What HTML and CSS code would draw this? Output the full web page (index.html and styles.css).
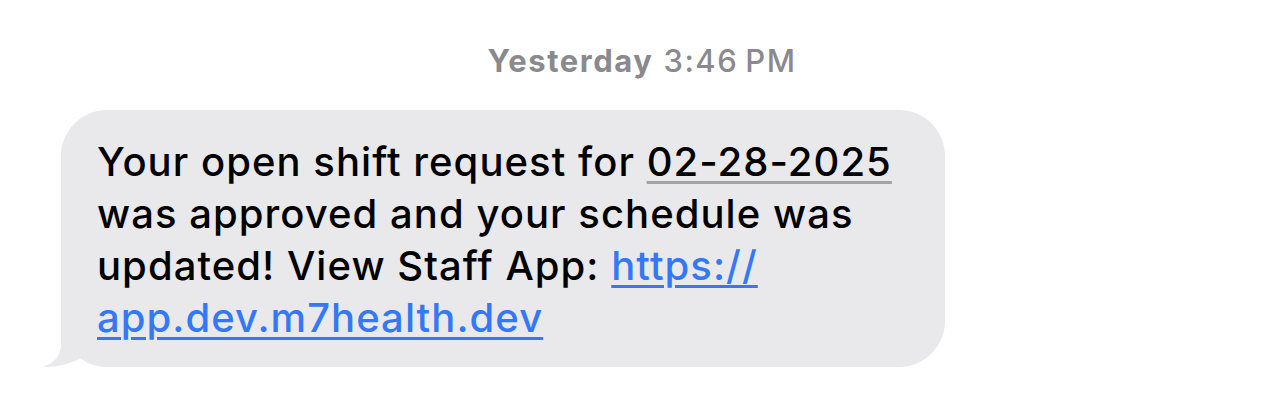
FILE: index.html
```html
<!DOCTYPE html>
<html>
<head>
	<title>Messages</title>
	<link rel="stylesheet" href="styles.css">
</head>
<body>
	<div class="thread">
		<p class="stamp"><b>Yesterday</b> 3:46&#8201;PM</p>

		<div class="bubble">
			<p class="bubble__text">
				Your open shift request for <span class="date">02-28-2025</span><br>
				was approved and your schedule was<br>
				updated! View Staff App: <a href="#">https://<br>app.dev.m7health.dev</a>
			</p>
			<svg class="bubble__tail" width="48" height="40" viewBox="0 0 48 40">
				<path d="M19 0 L19 17 C19 29 12 36 1 40 C14 40.5 27 37 40 31 L46 0 Z"/>
			</svg>
		</div>
	</div>
</body>
</html>
```

FILE: styles.css
```css
html {
  box-sizing: border-box;
}

*, *::before, *::after {
  box-sizing: inherit;
  margin: 0;
  padding: 0;
}

body {
  font-family: Inter, "Liberation Sans", sans-serif;
  background-color: white;
  color: black;
}

.thread {
  padding-top: 43px;
}

.stamp {
  text-align: center;
  font-size: 31px;
  line-height: 36px;
  letter-spacing: 0.05em;
  color: #8a8a8e;
  font-weight: 500;
}

.stamp b {
  font-weight: 650;
}

.bubble {
  position: relative;
  width: 884px;
  margin-top: 31px;
  margin-left: 61px;
  padding: 26px 20px 23px 36px;
  background-color: #e9e9eb;
  border-radius: 46px;
}

.bubble__text {
  font-size: 40px;
  line-height: 52px;
  font-weight: 530;
  letter-spacing: 1.05px;
  white-space: nowrap;
}

.date {
  text-decoration: underline;
  text-decoration-color: #a3a3a6;
  text-decoration-thickness: 3px;
  text-underline-offset: 5px;
}

.bubble__text a {
  color: #3478f6;
  text-decoration: underline;
  text-decoration-thickness: 3px;
  text-underline-offset: 5px;
}

.bubble__tail {
  position: absolute;
  left: -19px;
  bottom: 0;
  fill: #e9e9eb;
}
```
